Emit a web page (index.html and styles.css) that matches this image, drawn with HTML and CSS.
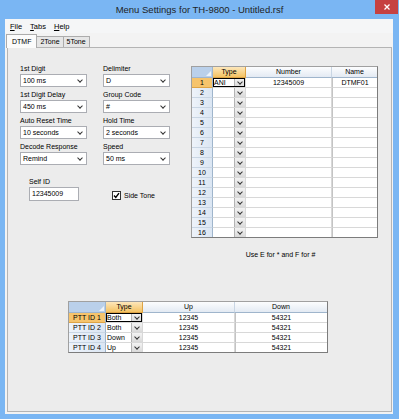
FILE: index.html
```html
<!DOCTYPE html>
<html lang="en">
<head>
    <meta charset="UTF-8">
    <meta name="viewport" content="width=device-width, initial-scale=1.0">
    <title>Menu Settings for TH-9800 - Untitled.rsf</title>
    <link rel="stylesheet" href="styles.css">
</head>
<body>
    <div class="window">
        <div class="titlebar">
            <span></span>
            <div class="title">Menu Settings for TH-9800 - Untitled.rsf</div>
            <button class="close" aria-label="Close">
                <svg width="6" height="6" viewBox="0 0 6 6"><path d="M0.5 0.5 L5.5 5.5 M5.5 0.5 L0.5 5.5" stroke="#fff" stroke-width="1.3" fill="none"/></svg>
            </button>
        </div>

        <div class="client">
            <div class="menubar">
                <span class="menu"><u>F</u>ile</span>
                <span class="menu"><u>T</u>abs</span>
                <span class="menu"><u>H</u>elp</span>
            </div>

            <div class="tabs">
                <div class="tab active">DTMF</div>
                <div class="tab">2Tone</div>
                <div class="tab">5Tone</div>
            </div>

            <div class="panel">
                <div class="top">
                    <div class="form">
                        <div class="fields">
                            <div class="field"><label>1st Digit</label><div class="select">100 ms</div></div>
                            <div class="field"><label>Delimiter</label><div class="select">D</div></div>
                            <div class="field"><label>1st Digit Delay</label><div class="select">450 ms</div></div>
                            <div class="field"><label>Group Code</label><div class="select">#</div></div>
                            <div class="field"><label>Auto Reset Time</label><div class="select">10 seconds</div></div>
                            <div class="field"><label>Hold Time</label><div class="select">2 seconds</div></div>
                            <div class="field"><label>Decode Response</label><div class="select">Remind</div></div>
                            <div class="field"><label>Speed</label><div class="select">50 ms</div></div>
                        </div>

                        <div class="extras">
                            <div class="selfid">
                                <label>Self ID</label>
                                <div class="textbox">12345009</div>
                            </div>
                            <div class="check">
                                <span class="box">
                                    <svg width="7" height="7" viewBox="0 0 7 7"><path d="M1 3.5 L2.8 5.5 L6 1.2" stroke="#000" stroke-width="1.4" fill="none"/></svg>
                                </span>
                                Side Tone
                            </div>
                        </div>
                    </div>

                    <div class="dtmf">
                        <table class="grid">
                            <colgroup>
                                <col class="c-num"><col class="c-type"><col class="c-number"><col class="c-name">
                            </colgroup>
                            <tr class="head">
                                <th class="corner"><div class="tri"></div></th>
                                <th class="sel">Type</th>
                                <th>Number</th>
                                <th>Name</th>
                            </tr>
                            <tr><th class="rh sel">1</th><td class="combo current"><div class="cb"><span>ANI</span><i class="drop"></i></div></td><td>12345009</td><td class="last">DTMF01</td></tr>
                            <tr><th class="rh">2</th><td class="combo"><div class="cb"><span></span><i class="drop"></i></div></td><td></td><td class="last"></td></tr>
                            <tr><th class="rh">3</th><td class="combo"><div class="cb"><span></span><i class="drop"></i></div></td><td></td><td class="last"></td></tr>
                            <tr><th class="rh">4</th><td class="combo"><div class="cb"><span></span><i class="drop"></i></div></td><td></td><td class="last"></td></tr>
                            <tr><th class="rh">5</th><td class="combo"><div class="cb"><span></span><i class="drop"></i></div></td><td></td><td class="last"></td></tr>
                            <tr><th class="rh">6</th><td class="combo"><div class="cb"><span></span><i class="drop"></i></div></td><td></td><td class="last"></td></tr>
                            <tr><th class="rh">7</th><td class="combo"><div class="cb"><span></span><i class="drop"></i></div></td><td></td><td class="last"></td></tr>
                            <tr><th class="rh">8</th><td class="combo"><div class="cb"><span></span><i class="drop"></i></div></td><td></td><td class="last"></td></tr>
                            <tr><th class="rh">9</th><td class="combo"><div class="cb"><span></span><i class="drop"></i></div></td><td></td><td class="last"></td></tr>
                            <tr><th class="rh">10</th><td class="combo"><div class="cb"><span></span><i class="drop"></i></div></td><td></td><td class="last"></td></tr>
                            <tr><th class="rh">11</th><td class="combo"><div class="cb"><span></span><i class="drop"></i></div></td><td></td><td class="last"></td></tr>
                            <tr><th class="rh">12</th><td class="combo"><div class="cb"><span></span><i class="drop"></i></div></td><td></td><td class="last"></td></tr>
                            <tr><th class="rh">13</th><td class="combo"><div class="cb"><span></span><i class="drop"></i></div></td><td></td><td class="last"></td></tr>
                            <tr><th class="rh">14</th><td class="combo"><div class="cb"><span></span><i class="drop"></i></div></td><td></td><td class="last"></td></tr>
                            <tr><th class="rh">15</th><td class="combo"><div class="cb"><span></span><i class="drop"></i></div></td><td></td><td class="last"></td></tr>
                            <tr><th class="rh">16</th><td class="combo"><div class="cb"><span></span><i class="drop"></i></div></td><td></td><td class="last"></td></tr>
                        </table>
                        <p class="note">Use E for * and F for #</p>
                    </div>
                </div>

                <table class="grid ptt">
                    <colgroup>
                        <col class="c-ptt"><col class="c-ptype"><col class="c-up"><col class="c-down">
                    </colgroup>
                    <tr class="head">
                        <th class="corner"><div class="tri"></div></th>
                        <th class="sel">Type</th>
                        <th>Up</th>
                        <th>Down</th>
                    </tr>
                    <tr><th class="rh sel">PTT ID 1</th><td class="combo current"><div class="cb"><span>Both</span><i class="drop"></i></div></td><td>12345</td><td class="last">54321</td></tr>
                    <tr><th class="rh">PTT ID 2</th><td class="combo"><div class="cb"><span>Both</span><i class="drop"></i></div></td><td>12345</td><td class="last">54321</td></tr>
                    <tr><th class="rh">PTT ID 3</th><td class="combo"><div class="cb"><span>Down</span><i class="drop"></i></div></td><td>12345</td><td class="last">54321</td></tr>
                    <tr><th class="rh">PTT ID 4</th><td class="combo"><div class="cb"><span>Up</span><i class="drop"></i></div></td><td>12345</td><td class="last">54321</td></tr>
                </table>
            </div>
        </div>
    </div>
</body>
</html>
```

FILE: styles.css
```css
:root {
    --frame: #7ab6f3;
    --face: #ececec;
    --field-border: #abadb3;
    --grid-line: #d8d8d8;
    --head-line: #c9d6e4;
    --sel-bg: #f6c46c;
    --sel-line: #dea446;
}
* {
    box-sizing: border-box;
}
body {
    margin: 0;
    font-family: "Liberation Sans", Arial, sans-serif;
    font-size: 7px;
    color: #000;
    background-color: var(--frame);
}
.window {
    width: 399px;
    height: 419px;
    display: flex;
    flex-direction: column;
    background-color: var(--frame);
}

/* title bar */
.titlebar {
    height: 19px;
    display: grid;
    grid-template-columns: 1fr auto 1fr;
}
.title {
    font-size: 9.5px;
    line-height: 19px;
    color: #1f1f1f;
    white-space: nowrap;
}
.close {
    justify-self: end;
    width: 23px;
    height: 14px;
    margin-right: 1px;
    padding: 0;
    border: none;
    background-color: #c64141;
    display: flex;
    align-items: center;
    justify-content: center;
}

/* window body */
.client {
    flex: 1;
    margin: 0 6px 5px 5px;
    background-color: #f3f3f3;
    display: flex;
    flex-direction: column;
}
.menubar {
    height: 14px;
    display: flex;
    align-items: center;
    padding-left: 1px;
    font-size: 7.5px;
    background-color: #f5f6f7;
}
.menu {
    padding: 0 4px;
}
.tabs {
    height: 14px;
    display: flex;
    align-items: flex-end;
    padding-left: 1px;
}
.tab {
    height: 11px;
    line-height: 10px;
    padding: 0 3px;
    border: 1px solid #acacac;
    border-bottom: none;
    border-left: none;
    background-color: #e6e6e6;
}
.tab.active {
    height: 14px;
    line-height: 13px;
    padding: 0 5px;
    margin-bottom: -1px;
    border-left: 1px solid #acacac;
    background-color: #fbfbfb;
    position: relative;
}
.panel {
    flex: 1;
    margin: 0 1px 2px 2px;
    border: 1px solid #b4b4b4;
    background-color: var(--face);
    padding: 16px 0 0 12px;
}

/* left form */
.top {
    display: flex;
    align-items: flex-start;
}
.form {
    width: 150px;
}
.fields,
.extras {
    display: grid;
    grid-template-columns: 67px 67px;
    column-gap: 16px;
}
.fields {
    row-gap: 3px;
}
.field label,
.selfid label {
    display: block;
    line-height: 10px;
}
.select {
    height: 13px;
    border: 1px solid var(--field-border);
    background-color: #fff;
    padding: 0 4px 0 2px;
    display: flex;
    align-items: center;
    justify-content: space-between;
}
.select::after,
.drop::after {
    content: "";
    width: 3px;
    height: 3px;
    border-right: 1px solid #333;
    border-bottom: 1px solid #333;
    transform: translateY(-1px) rotate(45deg);
}
.extras {
    margin-top: 12px;
}
.selfid {
    padding-left: 9px;
}
.textbox {
    width: 50px;
    height: 14px;
    border: 1px solid var(--field-border);
    background-color: #fff;
    padding-left: 2px;
    line-height: 12px;
}
.check {
    padding-left: 9px;
    margin-top: 12px;
    display: flex;
    align-items: center;
    gap: 3px;
}
.box {
    width: 9px;
    height: 9px;
    border: 1px solid #333;
    background-color: #fff;
    display: flex;
    align-items: center;
    justify-content: center;
}

/* grids */
.dtmf {
    margin: 2px 0 0 21px;
}
.grid {
    border-collapse: separate;
    border-spacing: 0;
    table-layout: fixed;
    border: 1px solid;
    border-color: #a0a0a0 #7c7c7c #7c7c7c #a0a0a0;
    background-color: #fff;
}
.c-num { width: 21px; }
.c-type { width: 33px; }
.c-number { width: 86px; }
.c-name { width: 45px; }
.c-ptt { width: 37px; }
.c-ptype { width: 37px; }
.c-up { width: 92px; }
.c-down { width: 92px; }
.grid th,
.grid td {
    padding: 0;
    line-height: 9px;
    font-weight: normal;
    text-align: center;
    white-space: nowrap;
    overflow: hidden;
    border-right: 1px solid var(--grid-line);
    border-bottom: 1px solid var(--grid-line);
}
.grid td.last {
    border-left: 1px solid #c4c4c4;
}
.grid tr:last-child th,
.grid tr:last-child td {
    border-bottom: none;
}
.grid th:last-child,
.grid td:last-child {
    border-right: none;
}
.head th {
    line-height: 10px;
    background: linear-gradient(#fcfdfe, #e3eaf3);
    border-right-color: var(--head-line);
    border-bottom-color: #9fb5cc;
}
.head th.corner {
    background: #bad0ea;
    border-right-color: #9fb5cc;
}
.tri {
    height: 10px;
    display: flex;
    justify-content: flex-end;
    align-items: flex-end;
    padding: 0 1px 1px 0;
}
.tri::after {
    content: "";
    border-left: 5px solid transparent;
    border-bottom: 5px solid #eef3f9;
}
.head th.sel {
    background: linear-gradient(#fde7bb, #f4c262);
    border-right-color: var(--sel-line);
    border-bottom-color: var(--sel-line);
}
.grid th.rh {
    background: linear-gradient(to right, #eef3fa, #dbe6f3);
    border-right-color: #9fb5cc;
    border-bottom-color: var(--head-line);
}
.grid th.rh.sel {
    background: var(--sel-bg);
    border-bottom-color: var(--sel-line);
}
.cb {
    height: 9px;
    display: flex;
    text-align: left;
}
.cb span {
    flex: 1;
    padding-left: 1px;
}
.drop {
    width: 11px;
    background: linear-gradient(#f3f3f3, #d9d9d9);
    border-left: 1px solid #b3b3b3;
    display: flex;
    align-items: center;
    justify-content: center;
}
.current .cb {
    outline: 2px solid #000;
    outline-offset: -1px;
}
.note {
    margin: 12px 0 0;
    padding-right: 8px;
    line-height: 9px;
    text-align: center;
}
.ptt {
    margin: 42px 0 0 48px;
}
```
